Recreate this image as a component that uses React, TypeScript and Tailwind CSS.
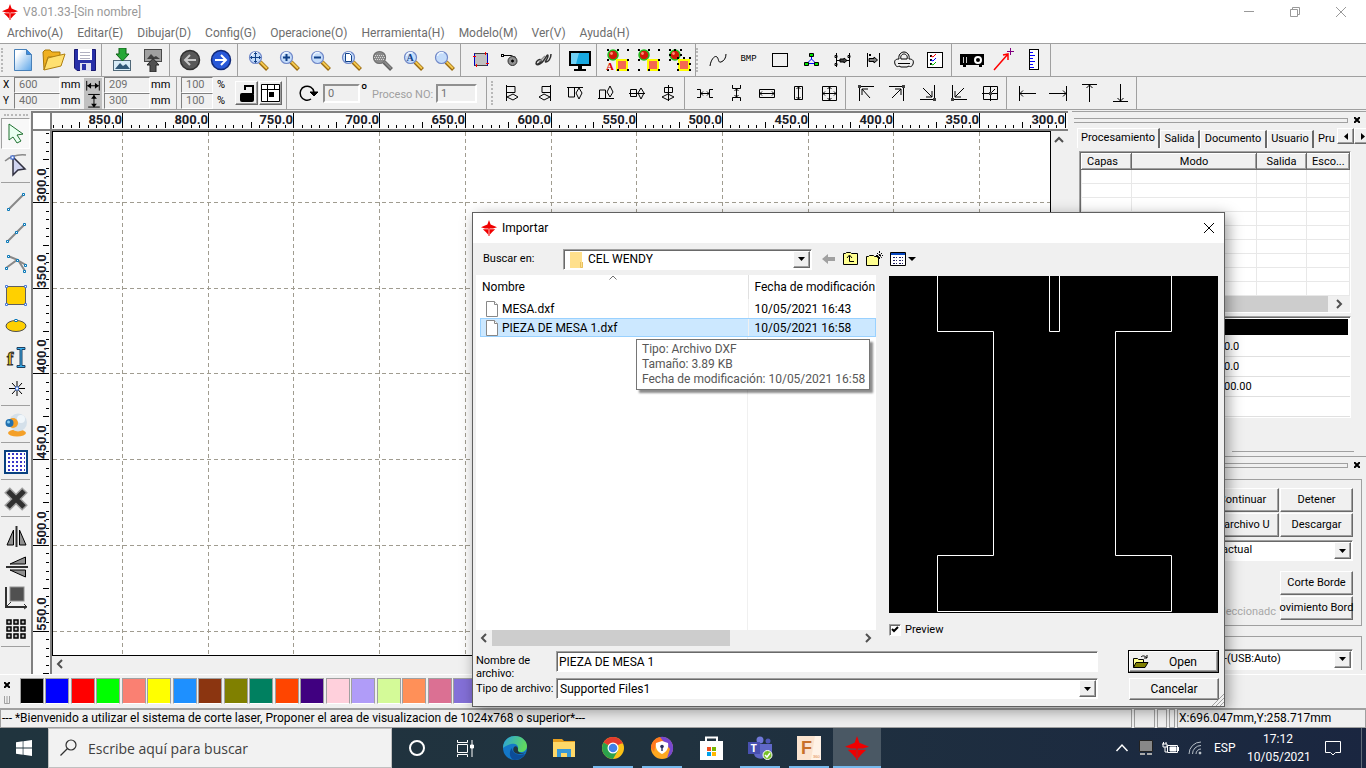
import { useState } from 'react';
import type { ReactNode } from 'react';

const raised =
    'border border-t-white border-l-white border-r-[#696969] border-b-[#696969] bg-[#f0f0f0] shadow-[inset_-1px_-1px_0_#a0a0a0]';
const sunken =
    'border border-t-[#a0a0a0] border-l-[#a0a0a0] border-r-white border-b-white bg-white shadow-[inset_1px_1px_0_#696969]';

const menus = [
    'Archivo(A)', 'Editar(E)', 'Dibujar(D)', 'Config(G)', 'Operacione(O)',
    'Herramienta(H)', 'Modelo(M)', 'Ver(V)', 'Ayuda(H)',
];

const palette = [
    '#000000', '#0000ff', '#ff0000', '#00ff00', '#fa8072', '#ffff00', '#1e90ff', '#8b3510', '#808000',
    '#008060', '#ff4500', '#400080', '#ffd0dc', '#b09cf8', '#d4fa98', '#ff9058', '#db7093', '#8470d8',
];

type Tool = { name: string; icon: ReactNode };

function Icon({ children, size = 24 }: { children: ReactNode; size?: number }) {
    return (
        <svg width={size} height={size} viewBox="0 0 24 24" fill="none" stroke="#000" className="shrink-0">
            {children}
        </svg>
    );
}

function Logo({ size = 16 }: { size?: number }) {
    return (
        <svg width={size} height={size} viewBox="0 0 16 16" fill="#f00000" className="shrink-0">
            <path d="M8 0 9.600 4.500 12 5.500 16 7.200 12 8.400H4L0 7.200 4 5.500 6.400 4.500z" />
            <path d="M1.800 9.200H7.300V14.800L4.800 12z" />
            <path d="M14.200 9.200H8.700V14.800L11.200 12z" />
            <path d="M7.500 3h1v13h-1z" />
        </svg>
    );
}

function Lens({ children, gray = false }: { children?: ReactNode; gray?: boolean }) {
    return (
        <Icon>
            <path d="M14 14 21.500 21.500" stroke={gray ? '#606060' : '#9a6a10'} strokeWidth="4" />
            <path d="M14.500 14 21 20.500" stroke={gray ? '#888' : '#f4c850'} strokeWidth="2" />
            <circle cx="9.500" cy="9.500" r="6" fill={gray ? '#8a8a8a' : '#c4dcfa'} stroke={gray ? '#707070' : '#7088c8'} strokeWidth="1.200" />
            {!gray && <path d="M5.500 8a4 4 0 0 1 6-3" stroke="#eef6ff" strokeWidth="1.500" />}
            {children}
        </Icon>
    );
}

function Shapes({ letter, dense }: { letter?: boolean; dense?: boolean }) {
    return (
        <Icon>
            <circle cx="8" cy="7" r="5" fill="#d01808" stroke="#20c020" strokeWidth="1.500" />
            <circle cx="6.500" cy="5.500" r="1.400" fill="#ff9078" stroke="none" />
            <rect x="12" y="12" width="10" height="10" fill="#f46850" stroke="#ffff00" strokeWidth="2" />
            <path
                d={dense ? 'M2 2h2M7 2h2M13 2h2M2 7h2M13 7h2M2 12h2M10 10h2M16 10h2M22 10h2M10 16h2M22 16h2M10 22h2M22 22h2' : 'M2 2h2M12 2h2M22 2h2M2 12h2M22 12h2M22 22h2M12 22h2M2 22h2'}
                strokeWidth="2"
            />
            {letter && <text x="1" y="22" fontSize="11" fontFamily="Liberation Serif" fontWeight="bold" fill="#e00000" stroke="none">A</text>}
        </Icon>
    );
}

const fileTools: Tool[][] = [
    [
        {
            name: 'Nuevo',
            icon: (
                <Icon>
                    <defs>
                        <linearGradient id="page" x1="0" y1="0" x2="1" y2="1">
                            <stop offset="0.2" stopColor="#fff" />
                            <stop offset="1" stopColor="#5aa4e8" />
                        </linearGradient>
                    </defs>
                    <path d="M3.500 1.500h12l5 5v16h-17z" fill="url(#page)" stroke="#4880b8" />
                    <path d="M15.500 1.500v5h5" fill="#3c8ce0" stroke="#4880b8" />
                </Icon>
            ),
        },
        {
            name: 'Abrir',
            icon: (
                <Icon>
                    <path d="M1 4l2-2h5l2 2h8v5H6L2 22z" fill="#f0b020" stroke="#a87808" />
                    <path d="M2 22 6 10l8-2 9-2-4 12z" fill="#ffe070" stroke="#b08010" />
                </Icon>
            ),
        },
        {
            name: 'Guardar',
            icon: (
                <Icon>
                    <path d="M1.500 1.500h21v21H4l-2.500-2.500z" fill="#2830a8" stroke="#181870" />
                    <rect x="5" y="1" width="14" height="11" fill="#fff" stroke="none" />
                    <path d="M7 4.500h10M7 7.500h10M7 10.500h10" stroke="#b0b0c0" />
                    <rect x="7" y="15" width="11" height="8" fill="#e0e0f0" stroke="none" />
                    <rect x="9" y="16" width="4" height="6" fill="#2830a8" stroke="none" />
                </Icon>
            ),
        },
    ],
    [
        {
            name: 'Importar',
            icon: (
                <Icon>
                    <rect x="3.500" y="12.500" width="17" height="10" fill="#d8ecf8" stroke="#506878" />
                    <path d="M5 21l5-6 3 3 3-2 4 5z" fill="#305878" stroke="none" />
                    <path d="M9 0h7v6h3l-6.500 7L6 6h3z" fill="#28a838" stroke="#106018" />
                </Icon>
            ),
        },
        {
            name: 'Exportar',
            icon: (
                <Icon>
                    <rect x="3.500" y="1.500" width="17" height="12" fill="#a0a0a0" stroke="#484848" />
                    <path d="M6 11l4-5 3 3 2-1 4 3z" fill="#404040" stroke="none" />
                    <path d="M9 24v-7H6l6-6.500 6 6.500h-3v7z" fill="#505050" stroke="#282828" />
                </Icon>
            ),
        },
    ],
    [
        {
            name: 'Deshacer',
            icon: (
                <Icon>
                    <circle cx="12" cy="12" r="9.500" fill="#585858" stroke="#303030" strokeWidth="1.500" />
                    <path d="M18 12H8M12 7l-5 5 5 5" stroke="#c8c8c8" strokeWidth="2" />
                </Icon>
            ),
        },
        {
            name: 'Rehacer',
            icon: (
                <Icon>
                    <circle cx="12" cy="12" r="9.500" fill="#2858d8" stroke="#102878" strokeWidth="1.500" />
                    <path d="M6 12h10M12 7l5 5-5 5" stroke="#fff" strokeWidth="2" />
                </Icon>
            ),
        },
    ],
    [
        { name: 'Mover vista', icon: <Lens><path d="M9.500 4.500v10M4.500 9.500h10M8 6l1.500-1.500L11 6M8 13l1.500 1.500L11 13M6 8 4.500 9.500 6 11M13 8l1.500 1.500L13 11" stroke="#104088" /></Lens> },
        { name: 'Acercar', icon: <Lens><path d="M9.500 6v7M6 9.500h7" stroke="#104088" strokeWidth="2" /></Lens> },
        { name: 'Alejar', icon: <Lens><path d="M6 9.500h7" stroke="#104088" strokeWidth="2" /></Lens> },
        { name: 'Ver pagina', icon: <Lens><path d="M6.500 5.500h4l2 2v6h-6z" fill="#fff" stroke="#104088" /></Lens> },
        { name: 'Ver mesa', icon: <Lens gray><path d="M5 7.500h9M4 9.500h11M5 11.500h9" stroke="#d8d8d8" strokeDasharray="1 1" /></Lens> },
        { name: 'Ver todo', icon: <Lens><text x="5.500" y="13" fontSize="10" fontWeight="bold" fontFamily="Liberation Serif" fill="#104088" stroke="none">A</text></Lens> },
        { name: 'Ver seleccion', icon: <Lens /> },
    ],
    [
        {
            name: 'Marco',
            icon: (
                <Icon>
                    <rect x="5.500" y="5.500" width="13" height="12" fill="#c0c0c0" stroke="#0000c0" />
                    <path d="M5.500 5.500h13M5.500 17.500h13" stroke="#404040" />
                    <path d="M16.500 4v3M4 8.500h3M7.500 16v3M17 15.500h3" stroke="#f00" />
                </Icon>
            ),
        },
        {
            name: 'Origen',
            icon: (
                <Icon>
                    <path d="M3 7.500h8l5 2" />
                    <rect x="1.500" y="6.500" width="2" height="2" fill="#fff" />
                    <circle cx="12.500" cy="13" r="4.500" fill="#909090" stroke="#303030" />
                    <circle cx="12.500" cy="13" r="1" fill="#000" />
                </Icon>
            ),
        },
        {
            name: 'Ruta',
            icon: (
                <Icon>
                    <path d="M5 16c0-4 4-5 5-4s-3 5-5 4c2 2 6-1 8-4s4-7 4-4-4 6-2 6 5-3 5-8" stroke="#303030" strokeWidth="1.500" />
                    <path d="M8 14l6-6" stroke="#909090" strokeWidth="1.500" />
                </Icon>
            ),
        },
    ],
    [
        {
            name: 'Pantalla',
            icon: (
                <Icon>
                    <rect x="1" y="3" width="22" height="15" fill="#000" stroke="none" />
                    <rect x="3" y="5" width="18" height="11" fill="#18a8e0" stroke="none" />
                    <path d="M3 5h8L8 16H3z" fill="#70d0f4" stroke="none" />
                    <path d="M10 18h4v3h4v2H6v-2h4z" fill="#000" stroke="none" />
                </Icon>
            ),
        },
    ],
    [
        { name: 'Agrupar texto', icon: <Shapes letter /> },
        { name: 'Agrupar', icon: <Shapes /> },
        { name: 'Desagrupar', icon: <Shapes dense /> },
    ],
];

const editTools: Tool[][] = [
    [
        { name: 'Curva', icon: <Icon><path d="M4 18c1-7 5-11 7-9s1 6 4 5 5-4 5-8" /></Icon> },
        { name: 'BMP', icon: <span className="font-['Liberation_Mono'] text-[9px] text-black">BMP</span> },
        { name: 'Contorno', icon: <Icon><rect x="4.500" y="5.500" width="15" height="13" /></Icon> },
        {
            name: 'Nodos',
            icon: (
                <Icon>
                    <path d="M12.500 8v3L8 15.500h9L12.500 11" stroke="#0000ff" />
                    <path d="M10.500 5.500h4v3h-4zM5.500 14.500h4v3h-4zM15.500 14.500h4v3h-4z" fill="#00e000" />
                </Icon>
            ),
        },
        {
            name: 'Separacion',
            icon: (
                <Icon>
                    <path d="M6.500 5v14M19.500 5v14M5 7.500h2v2H5zM5 15.500h2v2H5zM18 7.500h2v2h-2zM7 12.500h12" />
                    <path d="M10 11h4v-1l3 2.500-3 2.500v-1h-4z" fill="#404040" />
                </Icon>
            ),
        },
        {
            name: 'Margen',
            icon: (
                <Icon>
                    <path d="M6.500 5v14M18.500 5v14M8 6l2 2M8 8l2-2" />
                    <path d="M8 10.500h5v-1.500l3.500 3-3.500 3v-1.500H8z" fill="#808080" />
                </Icon>
            ),
        },
        {
            name: 'Trazo',
            icon: (
                <Icon>
                    <path d="M7 11C6 7 9 4 12 4s6 3 5 7c4 0 5 2 4 5s-3 3-4 2l-2 1H9l-2-1c-1 1-3 1-4-2s0-5 4-5z" />
                    <path d="M9 11c-1-3 1-5 3-5s4 2 3 5zM6 15.500h12" />
                </Icon>
            ),
        },
        {
            name: 'Comprobar',
            icon: (
                <Icon>
                    <rect x="4.500" y="4.500" width="15" height="15" fill="#fff" />
                    <path d="M7 8h2M7 12h2M7 16h2" strokeWidth="2" />
                    <path d="m8 8 2 1 3-3" stroke="#f00" />
                    <path d="m8 12 2 1 3-3" stroke="#00f" />
                    <path d="m8 16 2 1 3-3" stroke="#0b0" />
                </Icon>
            ),
        },
    ],
    [
        {
            name: 'Proyector',
            icon: (
                <Icon>
                    <path d="M0 6h24v11h-2v2h-3v-2H6v2H3v-2H0z" fill="#000" stroke="none" />
                    <path d="M3.500 9v6M6.500 9v6" stroke="#ccc" />
                    <circle cx="18" cy="12" r="3" fill="#000" stroke="#fff" strokeWidth="2" />
                </Icon>
            ),
        },
        {
            name: 'Medir',
            icon: (
                <Icon>
                    <path d="M3 22 17 6M12 7l5-1v6" stroke="#f00" strokeWidth="1.500" />
                    <path d="M19.500 0v7M16 3.500h7" stroke="#800080" />
                </Icon>
            ),
        },
        {
            name: 'Regla',
            icon: (
                <Icon>
                    <rect x="7.500" y="1.500" width="9" height="20" fill="#fff" />
                    <path d="M8 4.500h3M8 7.500h5M8 10.500h3M8 13.500h5M8 16.500h3M8 19.500h4" stroke="#00f" />
                </Icon>
            ),
        },
    ],
];

const alignTools: Tool[][] = [
    [
        { name: 'Izquierda', icon: <Icon><path d="M5.500 4v16M6 5.500h8v6H6M6 16l6-3 5 3-5 3z" /></Icon> },
        { name: 'Derecha', icon: <Icon><path d="M18.500 4v16M18 5.500h-8v6h8M18 16l-6-3-5 3 5 3z" /></Icon> },
        { name: 'Arriba', icon: <Icon><path d="M4 6.500h16M5.500 7v9h6V7M16 7l-3 5 3 6 3-6z" /></Icon> },
        { name: 'Abajo', icon: <Icon><path d="M4 17.500h16M5.500 17V9h6v8M16 16l-3-5 3-6 3 6z" /></Icon> },
        { name: 'Centro horizontal', icon: <Icon><path d="M4 12.500h16M5.500 8.500h6v7h-6zM16 7l-3 5 3 6 3-6z" /></Icon> },
        { name: 'Centro vertical', icon: <Icon><path d="M12.500 4v16M8.500 6.500h8v5h-8zM6 16l6-3 6 3-6 3z" /></Icon> },
    ],
    [
        { name: 'Espacio horizontal', icon: <Icon><path d="M4 8.500h3.500v8H4M20 8.500h-3.500v8H20M8 12.500h8M10 10.500l-2 2 2 2M14 10.500l2 2-2 2" /></Icon> },
        { name: 'Espacio vertical', icon: <Icon><path d="M8.500 4v3.500h8V4M8.500 20v-3.500h8V20M12.500 8v8M10.500 10l2-2 2 2M10.500 14l2 2 2-2" /></Icon> },
        { name: 'Mismo ancho', icon: <Icon><path d="M4.500 8.500h15v8h-15zM4.500 12.500h15M7 10.500l-2 2 2 2M17 10.500l2 2-2 2" /></Icon> },
        { name: 'Mismo alto', icon: <Icon><path d="M8.500 5.500h8v13h-8zM12.500 5.500v13M10.500 8l2-2 2 2M10.500 16l2 2 2-2" /></Icon> },
        { name: 'Mismo tamaño', icon: <Icon><path d="M5.500 5.500h14v14h-14zM12.500 5.500v14M5.500 12.500h14M8 10.500l-2 2 2 2M17 10.500l2 2-2 2M10.500 8l2-2 2 2M10.500 17l2 2 2-2" /></Icon> },
    ],
    [
        { name: 'Esquina superior izquierda', icon: <Icon><path d="M5.500 20V5.500H20M8 8l8 9M8 14V8h6" /><path d="M4 4h3v3H4z" fill="#404040" stroke="none" /></Icon> },
        { name: 'Esquina superior derecha', icon: <Icon><path d="M4 5.500h14.500V20M16 8l-9 9M10 8h6v6" /><path d="M17 4h3v3h-3z" fill="#404040" stroke="none" /></Icon> },
        { name: 'Esquina inferior derecha', icon: <Icon><path d="M4 18.500h14.500V4M16 16 7 7M10 16h6v-6" /><path d="M17 17h3v3h-3z" fill="#404040" stroke="none" /></Icon> },
        { name: 'Esquina inferior izquierda', icon: <Icon><path d="M20 18.500H5.500V4M8 16l9-9M8 10v6h6" /><path d="M4 17h3v3H4z" fill="#404040" stroke="none" /></Icon> },
        { name: 'Centro de mesa', icon: <Icon><path d="M5.500 5.500h14v13h-14zM12.500 5v15M4 12.500h16M12 13l5-5" /><path d="M11 11h3v3h-3z" fill="#404040" stroke="none" /></Icon> },
    ],
    [
        { name: 'Borde izquierdo', icon: <Icon><path d="M4.500 5v15M5 12.500h16M8 9.500l-3 3 3 3" /></Icon> },
        { name: 'Borde derecho', icon: <Icon><path d="M20.500 5v15M20 12.500H3M17 9.500l3 3-3 3" /></Icon> },
        { name: 'Borde superior', icon: <Icon><path d="M5 3.500h15M12.500 4v17M9.500 7l3-3 3 3" /></Icon> },
        { name: 'Borde inferior', icon: <Icon><path d="M5 20.500h15M12.500 20V3M9.500 17l3 3 3-3" /></Icon> },
    ],
];

const drawTools: Tool[][] = [
    [
        { name: 'Seleccionar', icon: <Icon><path d="M5 2v16l4-3 4 6 4-2-4-6 6-1z" fill="#e8fff0" stroke="#207030" /></Icon> },
        {
            name: 'Editar nodos',
            icon: (
                <Icon>
                    <path d="M1 8C7 3 13 1 22 2" stroke="#888" strokeWidth="1.500" />
                    <path d="M9 4v18l5-5 7-1z" fill="#d0d4f0" stroke="#303040" strokeWidth="1.500" />
                    <rect x="7" y="3" width="3" height="3" fill="#fff" stroke="#3060d0" />
                </Icon>
            ),
        },
    ],
    [
        {
            name: 'Linea',
            icon: (
                <Icon>
                    <path d="M5 19 19 5" stroke="#888" strokeWidth="2" />
                    <path d="M3.500 18.500h2v2h-2zM18.500 3.500h2v2h-2z" fill="#fff" stroke="#0878b8" />
                </Icon>
            ),
        },
        {
            name: 'Polilinea',
            icon: (
                <Icon>
                    <path d="M4 20 20 4" stroke="#888" strokeWidth="2" />
                    <path d="M2.500 19.500h2v2h-2zM11.500 10.500h2v2h-2zM19.500 2.500h2v2h-2z" fill="#fff" stroke="#0878b8" />
                </Icon>
            ),
        },
        {
            name: 'Curva bezier',
            icon: (
                <Icon>
                    <path d="M2 16 13 8l9 5M4 4l10 4 7 11" stroke="#888" strokeWidth="2" />
                    <path d="M1.500 15.500h2v2h-2zM3.500 3.500h2v2h-2zM12.500 7.500h2v2h-2zM20.500 12.500h2v2h-2zM19.500 18.500h2v2h-2z" fill="#fff" stroke="#0878b8" />
                </Icon>
            ),
        },
        {
            name: 'Rectangulo',
            icon: (
                <Icon>
                    <rect x="2.500" y="3.500" width="19" height="18" fill="#ffd000" stroke="#606060" />
                    <path d="M1.500 2.500h2v2h-2zM20.500 2.500h2v2h-2zM1.500 20.500h2v2h-2zM20.500 20.500h2v2h-2z" fill="#fff" stroke="#4878d8" />
                </Icon>
            ),
        },
        {
            name: 'Elipse',
            icon: (
                <Icon>
                    <ellipse cx="12" cy="12" rx="10" ry="5.500" fill="#ffd000" stroke="#505050" />
                    <rect x="11" y="5.500" width="2" height="2" fill="#fff" stroke="#0878b8" />
                </Icon>
            ),
        },
        {
            name: 'Texto',
            icon: (
                <Icon>
                    <text x="3" y="20" fontSize="19" fontWeight="bold" fontFamily="Liberation Serif" fill="#f8c810" stroke="#303030">f</text>
                    <path d="M13 2.500h8v2h-3v16h3v2h-8v-2h3v-16h-3z" fill="#38b0f0" stroke="#204060" />
                </Icon>
            ),
        },
        {
            name: 'Punto',
            icon: (
                <Icon>
                    <path d="M13 5v15M5 12.500h16M8 7l10 11M18 7 8 18" />
                    <rect x="11.500" y="11" width="3" height="3" fill="#fff" stroke="#4878d8" />
                </Icon>
            ),
        },
    ],
    [
        {
            name: 'Camara',
            icon: (
                <Icon>
                    <ellipse cx="13" cy="20" rx="9" ry="3.500" fill="#f4a028" stroke="none" />
                    <circle cx="14" cy="9.500" r="9" fill="#d4e0ea" stroke="none" />
                    <circle cx="17" cy="6" r="4" fill="#f0f6fa" stroke="none" />
                    <circle cx="9" cy="10" r="5" fill="#f4a028" stroke="none" />
                    <circle cx="5.500" cy="10" r="4" fill="#2070b0" stroke="none" />
                    <circle cx="4.500" cy="9" r="1.500" fill="#80c8f0" stroke="none" />
                </Icon>
            ),
        },
    ],
    [
        {
            name: 'Cuadricula',
            icon: (
                <Icon>
                    <rect x="1" y="1" width="22" height="22" fill="#fff" stroke="#084080" strokeWidth="2" />
                    <path d="M4 4h17M4 8h17M4 12h17M4 16h17M4 20h17" stroke="#3838c8" strokeWidth="2" strokeDasharray="2 2" />
                </Icon>
            ),
        },
    ],
    [
        {
            name: 'Eliminar',
            icon: (
                <Icon>
                    <path d="M3 3l18 18M21 3 3 21" stroke="#a0a0a0" strokeWidth="8" />
                    <path d="M4 4l16 16M20 4 4 20" stroke="#303030" strokeWidth="5" />
                </Icon>
            ),
        },
    ],
    [
        { name: 'Espejo horizontal', icon: <Icon><path d="M9.500 6v15H3zM15.500 6v15H22z" fill="#909090" /><path d="M12.500 2v21" stroke="#303030" strokeWidth="2" /></Icon> },
        { name: 'Espejo vertical', icon: <Icon><path d="M21.500 2v7H6zM21.500 22v-7H6z" fill="#909090" /><path d="M2 12h22" stroke="#303030" strokeWidth="2" /></Icon> },
        {
            name: 'Origen de mesa',
            icon: (
                <Icon>
                    <rect x="6" y="1" width="14" height="14" fill="#505050" stroke="#909090" />
                    <path d="M2 1v20h20" stroke="#303030" strokeWidth="2" />
                    <path d="M2 21l5-5M20 18l3 3-3 2" stroke="#303030" />
                </Icon>
            ),
        },
        {
            name: 'Matriz',
            icon: (
                <Icon>
                    <path d="M3 3h4v4H3zM10 3h4v4h-4zM17 3h4v4h-4zM3 10h4v4H3zM10 10h4v4h-4zM17 10h4v4h-4zM3 17h4v4H3zM10 17h4v4h-4zM17 17h4v4h-4z" fill="#b0b0b0" strokeWidth="1.500" />
                </Icon>
            ),
        },
    ],
];

function Grip() {
    return <div className="my-1 w-[2px] self-stretch border-l-2 border-dotted border-[#b8b8b8]" />;
}

function ToolGroups({ groups }: { groups: Tool[][] }) {
    return (
        <>
            {groups.map((group) => (
                <div key={group[0].name} className="flex h-full items-center border-r border-[#a0a0a0] pr-px pl-1">
                    {group.map((tool) => (
                        <button key={tool.name} aria-label={tool.name} className="flex h-6 w-[31px] items-center justify-center">
                            {tool.icon}
                        </button>
                    ))}
                </div>
            ))}
        </>
    );
}

function NumberBox({ label, value, wide }: { label: string; value: string; wide?: boolean }) {
    return (
        <input
            aria-label={label}
            defaultValue={value}
            className={`h-4 border border-t-[#808080] border-l-[#808080] border-r-white border-b-white bg-[#f0f0f0] pl-1 text-[11px] text-[#707070] ${wide ? 'w-[46px]' : 'w-8'}`}
        />
    );
}

function Pair({ children }: { children: ReactNode }) {
    return <div className="flex flex-col items-start">{children}</div>;
}

function SizeBar() {
    return (
        <div className="flex h-full items-center text-[11px] leading-4 text-black">
            <div className="w-[14px] pl-[3px] text-[10px]"><p>X</p><p>Y</p></div>
            <Pair><NumberBox label="X" value="600" wide /><NumberBox label="Y" value="400" wide /></Pair>
            <div className="w-6 pl-px"><p>mm</p><p>mm</p></div>
            <div className="mr-[2px] flex h-[31px] w-[18px] flex-col items-center bg-[#c0c0c0]">
                <svg width="16" height="16" viewBox="0 0 16 16" fill="none" stroke="#000"><path d="M1.500 3v10M14.500 3v10M2 8h12" /><path d="M6 5 2 8l4 3zM10 5l4 3-4 3z" fill="#000" stroke="none" /></svg>
                <svg width="16" height="16" viewBox="0 0 16 16" fill="none" stroke="#000"><path d="M3 1.500h12M3 14.500h12M9 2v12" /><path d="M6 6l3-4 3 4zM6 11l3 4 3-4z" fill="#000" stroke="none" /></svg>
            </div>
            <Pair><NumberBox label="Ancho" value="209" wide /><NumberBox label="Alto" value="300" wide /></Pair>
            <div className="w-[27px] border-r border-[#a0a0a0] pl-px"><p>mm</p><p>mm</p></div>
            <div className="ml-1"><Pair><NumberBox label="Escala X" value="100" /><NumberBox label="Escala Y" value="100" /></Pair></div>
            <div className="ml-1 w-[18px]"><p>%</p><p>%</p></div>
            <button aria-label="Bloquear" className={`flex h-6 w-[23px] items-center justify-center ${raised}`}>
                <svg width="18" height="20" viewBox="0 0 18 20"><path d="M7 7V3h8v8" fill="none" stroke="#000" strokeWidth="2" /><rect x="2" y="10" width="14" height="9" rx="2" /></svg>
            </button>
            <button aria-label="Posicion" className={`ml-px flex h-6 w-[23px] items-center justify-center ${raised}`}>
                <svg width="20" height="20" viewBox="0 0 20 20"><path d="M.5 1.500h18v17H.5z" fill="#fff" stroke="#000" /><path d="M1 6.500h17M6.500 2v16M13.500 2v4" stroke="#000" /><path d="M8 9h5v5H8z" /></svg>
            </button>
            <div className="ml-1 flex h-full items-center border-l border-[#a0a0a0] pl-2">
                <svg width="24" height="24" viewBox="0 0 24 24" fill="none" stroke="#000"><path d="M16 18a7 7 0 1 1 3-7" strokeWidth="1.500" /><path d="M15 11h8l-4 4z" fill="#000" /></svg>
                <input aria-label="Angulo" defaultValue="0" className="ml-1 h-[19px] w-[37px] border-2 border-t-[#909090] border-l-[#909090] border-r-white border-b-white pl-[3px] text-[#707070]" />
                <span className="w-3 self-start pt-1 pl-px text-[14px]">º</span>
                <label htmlFor="proceso" className="w-16 pt-1 whitespace-nowrap text-[#a0a0a0]">Proceso NO:</label>
                <input id="proceso" defaultValue="1" className="h-[19px] w-[41px] border-2 border-t-[#909090] border-l-[#909090] border-r-white border-b-white pl-[3px] text-[#707070]" />
            </div>
        </div>
    );
}

const SCALE = 85.7;
const minor = Array.from({ length: 260 }, (_, i) => i - 8);

function TopRuler() {
    return (
        <svg className="block h-5 w-full bg-[#fbfbfb]">
            <rect width="100%" height="2" fill="#808080" />
            <rect y="18" width="100%" height="2" fill="#808080" />
            {minor.map((n) => {
                const x = Math.round(70 + (n * SCALE) / 10);
                const top = n % 10 === 0 ? 2 : n % 5 === 0 ? 11 : 14;
                return <rect key={n} x={x} y={top} width="1" height={17 - top} />;
            })}
            {Array.from({ length: 12 }, (_, i) => (
                <text key={i} x={Math.round(70 + i * SCALE)} y="13" textAnchor="end" className="fill-[#202028] font-['Roboto'] text-[13px] font-bold">
                    {(850 - i * 50).toFixed(1)}
                </text>
            ))}
        </svg>
    );
}

function SideRuler() {
    return (
        <svg className="block h-full w-[17px] shrink-0 bg-[#fbfbfb]">
            {minor.map((n) => {
                const y = Math.round(71 + (n * SCALE) / 10);
                const left = n % 10 === 0 ? 0 : n % 5 === 0 ? 10 : 13;
                return <rect key={n} x={left} y={y} width={16 - left} height="1" />;
            })}
            {Array.from({ length: 6 }, (_, i) => {
                const y = Math.round(71 + i * SCALE);
                return (
                    <text key={i} x="13" y={y} transform={`rotate(-90 13 ${y})`} className="fill-[#202028] font-['Roboto'] text-[13px] font-bold">
                        {(300 + i * 50).toFixed(1)}
                    </text>
                );
            })}
        </svg>
    );
}

function Grid() {
    return (
        <svg className="block h-full w-full border border-black bg-white" stroke="#a09c90" strokeDasharray="4 3">
            {Array.from({ length: 18 }, (_, i) => {
                const x = Math.round(69 + i * SCALE) + 0.5;
                return <line key={i} x1={x} x2={x} y1="0" y2="2000" />;
            })}
            {Array.from({ length: 18 }, (_, i) => {
                const y = Math.round(70 + i * SCALE) + 0.5;
                return <line key={i} x1="0" x2="3000" y1={y} y2={y} />;
            })}
        </svg>
    );
}

function Chevron({ d }: { d: string }) {
    return (
        <svg width="16" height="16" viewBox="0 0 16 16" fill="none" stroke="#505050" strokeWidth="2" className="shrink-0">
            <path d={d} />
        </svg>
    );
}

const LEFT = 'M10 4 6 8l4 4';
const RIGHT = 'M6 4l4 4-4 4';
const UP = 'M4 10l4-4 4 4';

function Workspace() {
    return (
        <section className="mr-1 flex min-w-0 flex-1 flex-col border-l-2 border-[#808080]">
            <div className="flex">
                <div className="h-5 w-[17px] shrink-0 border-y-2 border-[#808080] bg-white" />
                <div className="min-w-0 flex-1 border-l-2 border-[#808080]"><TopRuler /></div>
            </div>
            <div className="flex min-h-0 flex-1">
                <SideRuler />
                <div className="flex min-w-0 flex-1 flex-col border-l-2 border-[#808080]">
                    <div className="flex min-h-0 flex-1">
                        <div className="min-w-0 flex-1"><Grid /></div>
                        <div className="w-[17px] pt-px"><Chevron d={UP} /></div>
                    </div>
                    <div className="flex h-[18px]"><Chevron d={LEFT} /></div>
                </div>
            </div>
        </section>
    );
}

function Select({ id, label, options, className }: { id: string; label: string; options: string[]; className?: string }) {
    return (
        <div className={`relative ${className ?? ''}`}>
            <select id={id} aria-label={label} className={`h-[21px] w-full appearance-none pl-[3px] text-black ${sunken}`}>
                {options.map((option) => <option key={option}>{option}</option>)}
            </select>
            <span className={`pointer-events-none absolute top-[2px] right-[2px] flex h-[17px] w-[17px] items-center justify-center ${raised}`}>
                <svg width="7" height="4" viewBox="0 0 7 4"><path d="M0 0h7L3.500 4z" /></svg>
            </span>
        </div>
    );
}

function PanelGrip() {
    return (
        <div className="flex h-4 items-center gap-[6px] pr-[6px] pl-[2px]">
            <div className="h-[5px] flex-1 border-y border-r border-[#a0a0a0]" />
            <button aria-label="Cerrar panel">
                <svg width="6" height="6" viewBox="0 0 6 6" stroke="#000" strokeWidth="2"><path d="M0 0l6 6M6 0 0 6" /></svg>
            </button>
        </div>
    );
}

const tabs = ['Salida', 'Documento', 'Usuario'];

function SidePanel() {
    return (
        <aside className="flex w-[294px] shrink-0 flex-col overflow-hidden border-t border-[#a0a0a0] text-[11px] text-black">
            <PanelGrip />
            <div role="tablist" className="flex h-5 items-end pl-[5px] whitespace-nowrap">
                <button role="tab" aria-selected="true" className="h-5 w-[83px] shrink-0 border-t border-r-2 border-l border-t-white border-l-white border-r-[#696969] pb-px">Procesamiento</button>
                {tabs.map((tab) => (
                    <button
                        key={tab}
                        role="tab"
                        aria-selected="false"
                        className={`h-[18px] shrink-0 border-t border-r-2 border-l border-t-white border-l-white border-r-[#696969] ${tab === 'Salida' ? 'w-10' : tab === 'Documento' ? 'w-[67px]' : 'w-[47px]'}`}
                    >
                        {tab}
                    </button>
                ))}
                <button role="tab" aria-selected="false" className="h-[18px] w-[23px] shrink-0 pl-1 text-left">Pru</button>
                <button aria-label="Anterior" className={`flex h-4 w-[17px] shrink-0 items-center justify-center self-start ${raised}`}>
                    <svg width="4" height="7" viewBox="0 0 4 7"><path d="M4 0v7L0 3.500z" /></svg>
                </button>
                <button aria-label="Siguiente" className={`flex h-4 w-[17px] shrink-0 items-center justify-center self-start ${raised}`}>
                    <svg width="4" height="7" viewBox="0 0 4 7"><path d="M0 0v7l4-3.500z" /></svg>
                </button>
            </div>
            <div className={`mt-[3px] mr-[15px] ml-[7px] pt-px pl-px ${sunken}`}>
                <table className="w-full table-fixed border-collapse">
                    <thead>
                        <tr className="h-4 leading-[14px]">
                            <th className={`w-[50px] p-0 pl-[5px] text-left font-normal ${raised}`}>Capas</th>
                            <th className={`w-[125px] p-0 font-normal ${raised}`}>Modo</th>
                            <th className={`w-[50px] p-0 font-normal ${raised}`}>Salida</th>
                            <th className={`p-0 pl-[5px] text-left font-normal ${raised}`}>Esco...</th>
                        </tr>
                    </thead>
                    <tbody>
                        {[0, 1, 2, 3, 4, 5, 6, 7, 8].map((row) => (
                            <tr key={row} className="h-[14px]">
                                {[0, 1, 2, 3].map((cell) => <td key={cell} className="border border-[#e8e8e8] p-0" />)}
                            </tr>
                        ))}
                    </tbody>
                </table>
                <div className="flex h-4 items-center justify-end bg-[#f0f0f0] pl-4">
                    <div className="h-4 flex-1 bg-[#cdcdcd]" />
                    <div className="flex w-[22px] justify-center"><Chevron d={RIGHT} /></div>
                </div>
            </div>
            <div className={`mt-[3px] mr-[15px] ml-2 pt-[2px] pl-px ${sunken}`}>
                <div className="mr-[2px] h-4 bg-black" />
                <div className="pt-[2px]">
                    {['0.0', '0.0', '00.00'].map((value, i) => (
                        <p key={i} className="h-5 border-b border-[#e0e0e0] pl-[142px] leading-5">{value}</p>
                    ))}
                    <p className="h-5 border-b border-[#e0e0e0]" />
                </div>
            </div>
            <div className="mt-[33px] mr-3 ml-40 border-t border-[#a0a0a0]" />
            <div className="mt-1 border-t border-[#a0a0a0]" />
            <PanelGrip />
            <div className="mt-[6px] mr-1 ml-2 border border-[#a0a0a0] pt-2 pr-2 pb-1 pl-[54px]">
                <div className="grid grid-cols-[73px_73px] justify-end gap-px whitespace-nowrap">
                    <button className={`h-6 ${raised}`}>Continuar</button>
                    <button className={`h-6 ${raised}`}>Detener</button>
                    <button className={`h-6 ${raised}`}>e archivo U</button>
                    <button className={`h-6 ${raised}`}>Descargar</button>
                </div>
                <Select id="origen" label="Origen" options={['actual']} className="mt-[3px] [&>select]:pl-[86px]" />
                <div className="mt-[10px] flex justify-end">
                    <button className={`h-6 w-[73px] ${raised}`}>Corte Borde</button>
                </div>
                <div className="mt-px flex items-center justify-end gap-1">
                    <span className="pt-2 text-[#a8a8a8]">eleccionadc</span>
                    <button className={`flex h-6 w-[73px] items-center justify-center whitespace-nowrap ${raised}`}>ovimiento Bord</button>
                </div>
            </div>
            <div className="mt-[10px] mr-1 ml-2 border-x border-t border-[#a0a0a0] pt-3 pr-2 pl-[54px]">
                <Select id="dispositivo" label="Dispositivo" options={['-(USB:Auto)']} className="[&>select]:pl-[88px]" />
            </div>
        </aside>
    );
}

const files = [
    { name: 'MESA.dxf', date: '10/05/2021 16:43', selected: false },
    { name: 'PIEZA DE MESA 1.dxf', date: '10/05/2021 16:58', selected: true },
];

function ImportDialog() {
    const [fileName, setFileName] = useState('PIEZA DE MESA 1');
    const [preview, setPreview] = useState(true);

    return (
        <div role="dialog" aria-label="Importar" className="absolute top-[212px] left-[472px] flex h-[495px] w-[753px] flex-col border border-[#606060] bg-[#f0f0f0] text-[12px] text-black shadow-[3px_4px_14px_rgba(0,0,0,0.4)]">
            <div className="flex h-[30px] items-center bg-white pr-2 pl-2">
                <Logo />
                <h2 className="flex-1 pl-[5px]">Importar</h2>
                <button aria-label="Cerrar">
                    <svg width="14" height="14" viewBox="0 0 14 14" stroke="#000"><path d="M2 2l10 10M12 2 2 12" /></svg>
                </button>
            </div>
            <div className="flex h-8 items-center pl-[10px]">
                <label htmlFor="carpeta" className="w-20 text-[11px]">Buscar en:</label>
                <div className="relative w-[249px]">
                    <Select id="carpeta" label="Buscar en" options={['CEL WENDY']} className="[&>select]:pl-6" />
                    <svg width="13" height="16" viewBox="0 0 13 16" className="pointer-events-none absolute top-[3px] left-[7px]"><path d="M0 0h12v10h1v6H0z" fill="#ffe08c" /><path d="M10.500 10v5.500h2V10" fill="none" stroke="#e8c060" /></svg>
                </div>
                <div className="flex items-center gap-[7px] pl-[10px]">
                    <button aria-label="Atras"><svg width="14" height="16" viewBox="0 0 14 16" fill="#a0a0a0"><path d="M0 8l6-5v3h7v4H6v3z" /></svg></button>
                    <button aria-label="Subir"><svg width="16" height="16" viewBox="0 0 16 16"><path d="M.5 13.500v-11h2l1-1h4l1 1h6v11z" fill="#ffff90" stroke="#000" /><path d="M11 10.500H6.500V5M4 7l2.500-3L9 7" fill="none" stroke="#000" /></svg></button>
                    <button aria-label="Nueva carpeta"><svg width="17" height="16" viewBox="0 0 17 16"><path d="M.5 14.500v-9h2l1-1h4l1 1h4v9z" fill="#ffff90" stroke="#000" /><path d="M13.500 0v8M10 4.500h7M11 2l5 5M16 2l-5 5" stroke="#000" strokeDasharray="2 1" /></svg></button>
                    <button aria-label="Vista"><svg width="26" height="16" viewBox="0 0 26 16"><path d="M.5 1.500h15v13H.5z" fill="#fff" stroke="#000" /><path d="M1 2h14v2H1z" fill="#0848c0" /><path d="M3 6.500h10M3 9.500h10M3 12.500h10" stroke="#202060" strokeDasharray="2 1 1 2" /><path d="M18 6h8l-4 4z" /></svg></button>
                </div>
            </div>
            <div className="flex min-h-0 flex-1">
                <div className="ml-[3px] flex w-[400px] flex-col bg-white">
                    <div className="relative flex flex-1 flex-col pl-1">
                        <table className="w-full table-fixed border-collapse text-left">
                            <thead>
                                <tr className="h-6">
                                    <th className="relative w-[268px] border-r border-[#e0e0e0] p-0 pl-[2px] font-normal">
                                        Nombre
                                        <svg width="8" height="5" viewBox="0 0 8 5" fill="none" stroke="#707070" className="absolute top-0 left-[129px]"><path d="M.5 4.500 4 1l3.500 3.500" /></svg>
                                    </th>
                                    <th className="p-0 pl-[6px] font-normal whitespace-nowrap">Fecha de modificación</th>
                                </tr>
                            </thead>
                            <tbody>
                                {files.map((file) => (
                                    <tr key={file.name} className={`h-[19px] ${file.selected ? 'bg-[#cce8ff] outline -outline-offset-1 outline-[#99d1ff]' : ''}`}>
                                        <td className="border-r border-[#f0f0f0] p-0 pl-[6px]">
                                            <span className="flex items-center gap-[4px] leading-[18px]">
                                                <svg width="12" height="16" viewBox="0 0 12 16" fill="#fff" stroke="#888"><path d="M.5.5h8l3 3v12H.5z" /><path d="M8.500.5v3h3" /></svg>
                                                {file.name}
                                            </span>
                                        </td>
                                        <td className="p-0 pl-[6px] leading-[18px]">{file.date}</td>
                                    </tr>
                                ))}
                            </tbody>
                        </table>
                        <div className="w-[268px] flex-1 border-r border-[#f0f0f0]" />
                        <div role="tooltip" className="absolute top-16 left-40 border border-[#767676] bg-white py-[2px] pr-1 pl-[5px] leading-[15px] whitespace-nowrap text-[#575757] shadow-[3px_3px_2px_rgba(0,0,0,0.45)]">
                            <p>Tipo: Archivo DXF</p>
                            <p>Tamaño: 3.89 KB</p>
                            <p>Fecha de modificación: 10/05/2021 16:58</p>
                        </div>
                    </div>
                    <div className="flex h-4 items-center bg-[#f0f0f0]">
                        <Chevron d={LEFT} />
                        <div className="mr-auto h-4 w-[238px] bg-[#cdcdcd]" />
                        <Chevron d={RIGHT} />
                    </div>
                </div>
                <div className="ml-[13px]">
                    <svg width="329" height="337" viewBox="0 0 329 337" fill="none" stroke="#fff" className="mt-px block bg-black">
                        {preview && <path d="M48.500 0v55.500h56v224h-56v56h234v-56h-56v-224h56V0M160.500 0v55.500h10V0" />}
                    </svg>
                    <label className="mt-[9px] flex items-center text-[11px]">
                        <input
                            type="checkbox"
                            checked={preview}
                            onChange={(e) => setPreview(e.target.checked)}
                            className={`peer h-3 w-3 appearance-none ${sunken}`}
                        />
                        <svg width="8" height="8" viewBox="0 0 8 8" fill="none" stroke="#000" strokeWidth="2" className="pointer-events-none relative right-[10px] opacity-0 peer-checked:opacity-100"><path d="M1 3l2 2 4-4" /></svg>
                        <span className="-ml-1">Preview</span>
                    </label>
                </div>
            </div>
            <div className="grid grid-cols-[80px_542px_90px] grid-rows-[27px_28px] items-start pt-[5px] pl-[3px]">
                <label htmlFor="archivo" className="pt-[3px] text-[11px] leading-[13px]">Nombre de archivo:</label>
                <input id="archivo" value={fileName} onChange={(e) => setFileName(e.target.value)} className={`h-[21px] pl-[2px] ${sunken}`} />
                <button className={`ml-[31px] flex h-[21px] w-[89px] items-center pl-[3px] ${raised} outline outline-black`}>
                    <svg width="16" height="14" viewBox="0 0 16 14"><path d="M.5 12.500v-9h4l1 1h5v3" fill="#ffff90" stroke="#000" /><path d="M.5 12.500 3 7.500h12l-3 5z" fill="#808000" stroke="#000" /><path d="M8 2c2-2 4-1 6 1M14 0v3h-3" fill="none" stroke="#000" /></svg>
                    <span className="flex-1">Open</span>
                </button>
                <label htmlFor="tipo" className="pt-[3px] text-[11px] whitespace-nowrap">Tipo de archivo:</label>
                <Select id="tipo" label="Tipo de archivo" options={['Supported Files1']} />
                <button className={`ml-[31px] h-[22px] w-[90px] ${raised}`}>Cancelar</button>
            </div>
            <svg width="12" height="12" viewBox="0 0 12 12" stroke="#a0a0a0" strokeWidth="1" className="absolute right-0 bottom-0"><path d="M0 12 12 0M4 12l8-8M8 12l4-4" /></svg>
        </div>
    );
}

function PaletteBar() {
    return (
        <div className="flex h-[35px] border-y border-t-white border-b-[#a0a0a0] bg-[#f0f0f0]">
            <div className="flex w-5 flex-col items-start gap-2 pt-[7px] pl-1">
                <svg width="6" height="6" viewBox="0 0 6 6" stroke="#000" strokeWidth="2"><path d="M0 0l6 6M6 0 0 6" /></svg>
                <svg width="6" height="8" viewBox="0 0 6 8" stroke="#a0a0a0" fill="none"><path d="M.5 0v7.500h5V0M3 0v7" /></svg>
            </div>
            <div className="mt-[3px] flex w-[457px] justify-between">
                {palette.map((color) => (
                    <button
                        key={color}
                        aria-label={color}
                        style={{ backgroundColor: color }}
                        className="h-[26px] w-6 border border-[#a0a0a0] border-b-white"
                    />
                ))}
            </div>
        </div>
    );
}

function StatusBar() {
    return (
        <div className="flex h-[19px] gap-[2px] bg-[#f0f0f0] text-[12px] leading-[17px] text-black">
            <p className="flex-1 border border-[#a0a0a0] pl-px">--- *Bienvenido a utilizar el sistema de corte laser, Proponer el area de visualizacion de 1024x768 o superior*---</p>
            <p className="w-[21px] border border-[#a0a0a0]" />
            <p className="w-[10px] border border-[#a0a0a0]" />
            <p className="w-[6px] border border-[#a0a0a0]" />
            <p className="w-[189px] border border-[#a0a0a0] pl-px">X:696.047mm,Y:258.717mm</p>
        </div>
    );
}

const apps = [
    {
        name: 'Cortana',
        open: false,
        icon: <svg width="24" height="24" viewBox="0 0 24 24"><circle cx="12" cy="12" r="7" fill="none" stroke="#fff" strokeWidth="2" /></svg>,
    },
    {
        name: 'Vista de tareas',
        open: false,
        icon: <svg width="24" height="24" viewBox="0 0 24 24" fill="none" stroke="#fff"><path d="M3.500 8.500h10v8h-10zM3.500 4v2.500h10V4M3.500 21v-2.500h10V21M18 4v17" /><path d="M16.500 9h3v3h-3z" fill="#fff" /></svg>,
    },
    {
        name: 'Edge',
        open: false,
        icon: (
            <svg width="24" height="24" viewBox="0 0 24 24">
                <defs>
                    <linearGradient id="edge" x1="0" y1="0" x2="1" y2="0.3"><stop stopColor="#28a0e0" /><stop offset="1" stopColor="#60d860" /></linearGradient>
                </defs>
                <circle cx="12" cy="12" r="12" fill="#1478c8" />
                <path d="M0 12C0 5 5 0 12 0s12 5 12 10c0 4-3 6-6 6-4 0-4-2-3-3 1-4-3-6-7-5C4 9 1 11 0 12z" fill="url(#edge)" />
                <path d="M9 12c0 5 5 8 13 6-3 5-8 6-11 6-4-1-6-8-2-12z" fill="#0c4c98" />
                <path d="M11 11c-2 3 0 7 5 7 3 0 6-1 7-2-3 2-9 1-8-3 0-2-2-4-4-2z" fill="#203540" />
            </svg>
        ),
    },
    {
        name: 'Explorador',
        open: false,
        icon: <svg width="24" height="24" viewBox="0 0 24 24"><path d="M1 3h9l2 2h11v3H1z" fill="#e8a020" /><path d="M1 6h22v15H1z" fill="#ffd868" /><path d="M5 21v-8h14v8h-4v-4H9v4z" fill="#3898d8" /></svg>,
    },
    {
        name: 'Chrome',
        open: true,
        icon: (
            <svg width="24" height="24" viewBox="0 0 24 24">
                <circle cx="12" cy="12" r="11" fill="#fbc116" />
                <path d="M12 12 2.500 6.500A11 11 0 0 1 21.500 6.500z" fill="#e33b2e" />
                <path d="M2.500 6.500A11 11 0 0 0 12 23l5-8.500L12 12z" fill="#2ba24c" />
                <path d="M12 6.500h9.500l.5 1H12z" fill="#e33b2e" />
                <circle cx="12" cy="12" r="5.500" fill="#fff" />
                <circle cx="12" cy="12" r="4.300" fill="#4080e8" />
            </svg>
        ),
    },
    {
        name: 'Navegador seguro',
        open: true,
        icon: (
            <svg width="24" height="24" viewBox="0 0 24 24">
                <circle cx="12" cy="12" r="11" fill="#ffa820" />
                <path d="M1 12A11 11 0 0 1 12 1l2 4-8 3-2 8z" fill="#ff7820" />
                <path d="M10 1a11 11 0 0 1 13 10 11 11 0 0 1-6 11l3-9-7-8z" fill="#7848d0" />
                <path d="M12 5l6 2c1 6-2 9-6 11-4-2-7-5-6-11z" fill="#fff" />
                <circle cx="12" cy="10.500" r="1.800" fill="#283060" />
                <path d="M11.300 10h1.400v5h-1.400z" fill="#283060" />
            </svg>
        ),
    },
    {
        name: 'Tienda',
        open: false,
        icon: (
            <svg width="24" height="24" viewBox="0 0 24 24">
                <path d="M7 6V1.500h11V6" fill="none" stroke="#fff" strokeWidth="2" />
                <path d="M1 5h23v19H1z" fill="#fff" />
                <path d="M8 11h4v4H8z" fill="#f05020" /><path d="M13 11h4v4h-4z" fill="#78b800" />
                <path d="M8 16h4v4H8z" fill="#00a0e8" /><path d="M13 16h4v4h-4z" fill="#ffb800" />
            </svg>
        ),
    },
    {
        name: 'Teams',
        open: true,
        icon: (
            <svg width="26" height="24" viewBox="0 0 26 24">
                <circle cx="13" cy="4" r="3.500" fill="#7078d8" /><circle cx="21" cy="5" r="2.500" fill="#5058b8" />
                <path d="M7 8h18v10c0 3-4 4-6 3-4 3-12 2-12-4z" fill="#6068c8" />
                <path d="M1 6h12v12H1z" fill="#4850b0" />
                <text x="3.500" y="16" fontSize="11" fontWeight="bold" fontFamily="Open Sans" fill="#fff">T</text>
                <circle cx="20.500" cy="19" r="4.500" fill="#78c028" stroke="#fff" /><path d="M18 19l2 2 3-4" fill="none" stroke="#fff" strokeWidth="1.500" />
            </svg>
        ),
    },
    {
        name: 'Fusion 360',
        open: true,
        icon: (
            <svg width="24" height="24" viewBox="0 0 24 24">
                <path d="M0 0h24v24H0z" fill="#fbe4d0" />
                <path d="M18 0h6v24H14z" fill="#fff2e6" />
                <text x="4" y="18" fontSize="18" fontWeight="bold" fontFamily="Liberation Sans" fill="#c87028">F</text>
                <text x="16" y="22" fontSize="4" fontFamily="Liberation Sans" fill="#e08040">360</text>
            </svg>
        ),
    },
];

function Taskbar() {
    return (
        <footer className="flex h-10 bg-linear-to-r from-[#20343e] via-[#20323f] to-[#1a2640] text-white">
            <button aria-label="Inicio" className="flex w-12 items-center justify-center">
                <svg width="16" height="16" viewBox="0 0 16 16" fill="#fff"><path d="M0 2.200 6.700 1.300V7.600H0zM7.400 1.200 16 0V7.600H7.400zM0 8.400H6.700V14.700L0 13.800zM7.400 8.400H16V16L7.400 14.800z" /></svg>
            </button>
            <div className="flex w-[344px] items-center border border-[#c0c0c0] bg-[#f2f2f2] pl-[10px]">
                <svg width="20" height="20" viewBox="0 0 20 20" fill="none" stroke="#303030" strokeWidth="1.200"><circle cx="12" cy="7" r="5" /><path d="M8.500 10.500l-7 7" /></svg>
                <input aria-label="Buscar" placeholder="Escribe aquí para buscar" className="min-w-0 flex-1 pl-[9px] font-['Open_Sans'] text-[14px] placeholder:text-[#404040]" />
            </div>
            <nav className="flex flex-1">
                {apps.map((app) => (
                    <button key={app.name} aria-label={app.name} className="flex w-[49px] flex-col items-center pt-2">
                        <span className="flex h-[30px] items-start">{app.icon}</span>
                        {app.open && <span className="h-[2px] w-10 bg-[#76b9ed]" />}
                    </button>
                ))}
                <button aria-label="Corte laser" className="flex w-12 flex-col items-center border-b-2 border-[#76b9ed] bg-[#4a5864] pt-2">
                    <Logo size={24} />
                </button>
            </nav>
            <div className="flex items-center text-[12px]">
                <svg width="14" height="14" viewBox="0 0 14 14" fill="none" stroke="#fff" className="mr-[10px]"><path d="M1.500 10 7 4l5.500 6" strokeWidth="1.500" /></svg>
                <svg width="14" height="16" viewBox="0 0 14 16" className="mr-[9px]"><path d="M.5.5h13v11H.5z" fill="#888" stroke="#222" /><path d="M1 13h5v2H1zM8 13h5v2H8z" fill="#aaa" /></svg>
                <svg width="17" height="14" viewBox="0 0 17 14" fill="none" stroke="#fff" className="mr-[9px]"><path d="M5.500 4.500h10v7h-10zM16.500 6v4" /><path d="M8 6h6v4H8z" fill="#fff" /><path d="M0 3h5v3H1V3M1.500 1v2M4 1v2M3 6v5h2" /></svg>
                <svg width="14" height="14" viewBox="0 0 14 14" fill="none" stroke="#b8c0c8" className="mr-3"><path d="M1 13A12 12 0 0 1 13 1M4.500 13A8.500 8.500 0 0 1 13 4.500M8 13a5 5 0 0 1 5-5" /><circle cx="12" cy="12" r="1" fill="#fff" /></svg>
                <span className="w-[33px]">ESP</span>
                <div className="w-[62px] text-center leading-[18px]">
                    <p>17:12</p>
                    <p>10/05/2021</p>
                </div>
                <button aria-label="Notificaciones" className="ml-4 pr-5">
                    <svg width="16" height="16" viewBox="0 0 16 16" fill="none" stroke="#fff"><path d="M.5 1.500h15v11h-5L8 15l-2.500-2.500h-5z" /></svg>
                </button>
                <div className="mr-1 h-10 w-px bg-[#606c78]" />
            </div>
        </footer>
    );
}

export default function App() {
    return (
        <div className="relative flex min-h-screen flex-col overflow-hidden bg-[#f0f0f0] font-['Roboto','Noto_Sans',sans-serif]">
            <header className="bg-white text-[12px]">
                <div className="flex h-6 items-center pl-[2px]">
                    <Logo />
                    <h1 className="flex-1 pl-[5px] text-[#999]">V8.01.33-[Sin nombre]</h1>
                    <div className="flex items-center gap-8 pr-[18px]">
                        <button aria-label="Minimizar"><svg width="14" height="14" viewBox="0 0 14 14" stroke="#999"><path d="M2 6.500h10" /></svg></button>
                        <button aria-label="Restaurar"><svg width="14" height="14" viewBox="0 0 14 14" fill="none" stroke="#999"><path d="M2.500 4.500h7v7h-7zM4.500 4.500v-2h7v7h-2" /></svg></button>
                        <button aria-label="Cerrar ventana"><svg width="14" height="14" viewBox="0 0 14 14" stroke="#999"><path d="M2 2l10 10M12 2 2 12" /></svg></button>
                    </div>
                </div>
                <nav className="flex h-[19px] items-center gap-[14px] pb-[2px] pl-[7px] text-[#6d6d6d]">
                    {menus.map((menu) => <button key={menu}>{menu}</button>)}
                </nav>
            </header>
            <div className="flex h-[34px] items-center border-y border-t-[#a0a0a0] border-b-[#a0a0a0] pl-px">
                <Grip />
                <ToolGroups groups={fileTools} />
                <Grip />
                <ToolGroups groups={editTools} />
            </div>
            <div className="flex h-[33px] items-center border-b border-[#a0a0a0]">
                <SizeBar />
                <div className="ml-[9px] flex h-full items-center border-l border-[#a0a0a0] pl-1">
                    <Grip />
                    <ToolGroups groups={alignTools} />
                </div>
            </div>
            <main className="flex min-h-0 flex-1 pt-px">
                <div className="flex w-[31px] shrink-0 flex-col items-center pt-[3px]">
                    <div className="mb-[2px] w-6 border-t-2 border-dotted border-[#b8b8b8]" />
                    {drawTools.map((group) => (
                        <div key={group[0].name} className="mb-[3px] flex w-[29px] flex-col border-b border-[#a0a0a0] pb-[2px]">
                            {group.map((tool) => (
                                <button
                                    key={tool.name}
                                    aria-label={tool.name}
                                    className={`flex h-[31px] items-center justify-center ${tool.name === 'Seleccionar' ? 'border border-t-[#a0a0a0] border-l-[#a0a0a0] border-r-white border-b-white bg-[#f8f8f8]' : ''}`}
                                >
                                    {tool.icon}
                                </button>
                            ))}
                        </div>
                    ))}
                </div>
                <Workspace />
                <SidePanel />
            </main>
            <PaletteBar />
            <StatusBar />
            <Taskbar />
            <ImportDialog />
        </div>
    );
}
